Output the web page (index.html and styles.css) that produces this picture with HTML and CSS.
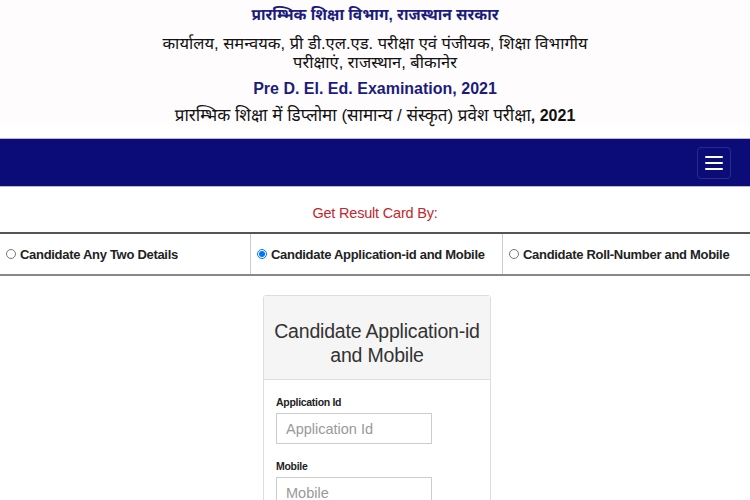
FILE: index.html
```html
<!DOCTYPE html>
<html lang="hi">
<head>
    <meta charset="UTF-8">
    <title>Pre D. El. Ed. Examination, 2021</title>
    <link rel="stylesheet" href="styles.css">
</head>
<body>
    <div class="header">
        <div class="dept">प्रारम्भिक शिक्षा विभाग, राजस्थान सरकार</div>
        <div class="office">कार्यालय, समन्वयक, प्री डी.एल.एड. परीक्षा एवं पंजीयक, शिक्षा विभागीय<br>परीक्षाएं, राजस्थान, बीकानेर</div>
        <div class="exam">Pre D. El. Ed. Examination, 2021</div>
        <div class="exam-hi">प्रारम्भिक शिक्षा में डिप्लोमा (सामान्य / संस्कृत) प्रवेश परीक्षा<b>, 2021</b></div>
    </div>

    <div class="navbar">
        <button type="button" class="navbar-toggle">
            <span class="icon-bar"></span>
            <span class="icon-bar"></span>
            <span class="icon-bar"></span>
        </button>
    </div>

    <div class="result-by">Get Result Card By:</div>

    <div class="options">
        <label class="option"><input type="radio" name="searchBy" value="any"> Candidate Any Two Details</label>
        <label class="option"><input type="radio" name="searchBy" value="app" checked> Candidate Application-id and Mobile</label>
        <label class="option"><input type="radio" name="searchBy" value="roll"> Candidate Roll-Number and Mobile</label>
    </div>

    <div class="panel">
        <div class="panel-heading">Candidate Application-id and Mobile</div>
        <div class="panel-body">
            <label for="appId">Application Id</label>
            <input type="text" id="appId" name="appId" placeholder="Application Id">

            <label for="mobile">Mobile</label>
            <input type="text" id="mobile" name="mobile" placeholder="Mobile">
        </div>
    </div>
</body>
</html>
```

FILE: styles.css
```css
body {
    margin: 0;
    padding: 0;
    font-family: "Liberation Sans", "Noto Sans Devanagari", "Noto Sans", sans-serif;
    background-color: #fff;
    color: #222;
}
.header {
    background-color: #fefcfd;
    text-align: center;
    padding-top: 3px;
    height: 125px;
    box-sizing: border-box;
}
.dept {
    color: #1c1c7c;
    font-size: 15.5px;
    font-weight: bold;
    line-height: 24px;
}
.office {
    font-size: 16.5px;
    line-height: 19px;
    margin-top: 7px;
    color: #111;
}
.exam {
    color: #1c1c7c;
    font-size: 16px;
    font-weight: bold;
    line-height: 22px;
    margin-top: 6px;
}
.exam-hi {
    font-size: 17px;
    line-height: 24px;
    margin-top: 4px;
    color: #111;
}
.exam-hi b {
    font-size: 16px;
}
.navbar {
    margin-top: 13px;
    height: 49px;
    background-color: #0c0c78;
    border-top: 1px solid #b8b8d8;
    border-bottom: 1px solid #b8b8d8;
    box-sizing: border-box;
    display: flex;
    justify-content: flex-end;
    align-items: center;
    padding-right: 19px;
}
.navbar-toggle {
    width: 34px;
    height: 32px;
    background: transparent;
    border: 1px solid #2a2a88;
    border-radius: 4px;
    display: flex;
    flex-direction: column;
    justify-content: center;
    align-items: center;
    gap: 4px;
    padding: 0;
}
.icon-bar {
    display: block;
    width: 18px;
    height: 2px;
    background-color: #fff;
    border-radius: 1px;
}
.result-by {
    text-align: center;
    color: #c1272d;
    font-size: 14.5px;
    letter-spacing: -0.2px;
    padding: 18px 0 11px;
}
.options {
    display: grid;
    grid-template-columns: 250px 252px 1fr;
    border-top: 2px solid #555;
    border-bottom: 2px solid #888;
}
.option {
    display: flex;
    align-items: center;
    gap: 4px;
    height: 40px;
    padding-left: 6px;
    font-size: 13px;
    letter-spacing: -0.3px;
    font-weight: bold;
    white-space: nowrap;
    color: #222;
    border-left: 1px solid #ccc;
}
.option:first-child {
    border-left: none;
}
.option input {
    margin: 0;
    width: 10px;
    height: 10px;
}
.panel {
    width: 226px;
    margin: 19px 0 0 263px;
    border: 1px solid #ddd;
    border-radius: 3px;
}
.panel-heading {
    background-color: #f5f5f5;
    border-bottom: 1px solid #ddd;
    height: 84px;
    box-sizing: border-box;
    padding: 23px 6px 0;
    text-align: center;
    font-size: 19.5px;
    letter-spacing: -0.2px;
    line-height: 24px;
    color: #333;
}
.panel-body {
    padding: 16px 12px 20px;
}
.panel-body label {
    display: block;
    font-size: 10.5px;
    letter-spacing: -0.3px;
    font-weight: bold;
    color: #222;
    margin-bottom: 5px;
}
.panel-body input {
    display: block;
    width: 156px;
    height: 31px;
    box-sizing: border-box;
    border: 1px solid #ccc;
    padding: 0 9px;
    font-family: "Liberation Sans", sans-serif;
    font-size: 14.5px;
    margin-bottom: 16px;
}
.panel-body input::placeholder {
    color: #999;
}
```
